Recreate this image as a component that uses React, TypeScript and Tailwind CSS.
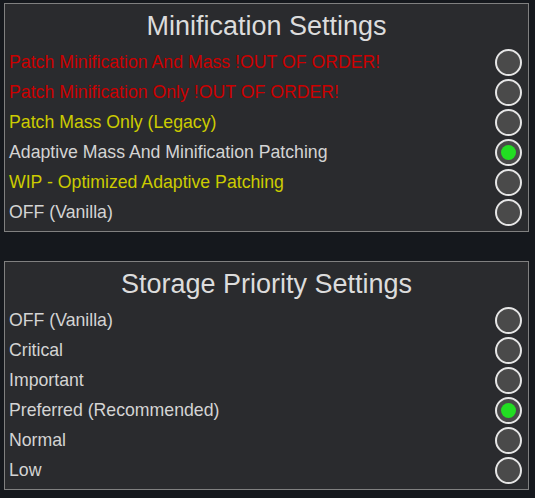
import React from 'react'

type Option = { label: string; tone: 'red' | 'yellow' | 'plain'; on?: boolean }

const minification: Option[] = [
  { label: 'Patch Minification And Mass !OUT OF ORDER!', tone: 'red' },
  { label: 'Patch Minification Only !OUT OF ORDER!', tone: 'red' },
  { label: 'Patch Mass Only (Legacy)', tone: 'yellow' },
  { label: 'Adaptive Mass And Minification Patching', tone: 'plain', on: true },
  { label: 'WIP - Optimized Adaptive Patching', tone: 'yellow' },
  { label: 'OFF (Vanilla)', tone: 'plain' },
]

const storage: Option[] = [
  { label: 'OFF (Vanilla)', tone: 'plain' },
  { label: 'Critical', tone: 'plain' },
  { label: 'Important', tone: 'plain' },
  { label: 'Preferred (Recommended)', tone: 'plain', on: true },
  { label: 'Normal', tone: 'plain' },
  { label: 'Low', tone: 'plain' },
]

const toneClass = {
  red: 'text-[#cc0000]',
  yellow: 'text-[#cccc00]',
  plain: 'text-[#d4d4d4]',
}

function Radio({ on }: { on?: boolean }) {
  return (
    <div className="flex h-[27px] w-[27px] items-center justify-center rounded-full border-2 border-[#e6e6e6] bg-[#4a4a4a]">
      {on && <div className="h-[15px] w-[15px] rounded-full bg-[#22dd22]" />}
    </div>
  )
}

function Panel({ title, options }: { title: string; options: Option[] }) {
  return (
    <div className="h-[229px] w-[525px] border border-[#808080] bg-[#2a2b2e]">
      <div className="h-[43px] pt-[6px] text-center text-[27px] leading-[32px] text-[#dcdcdc]">
        {title}
      </div>
      {options.map((o) => (
        <div key={o.label} className="flex h-[30px] items-center justify-between pl-[4px] pr-[6px]">
          <span className={`text-[17.7px] leading-[20px] ${toneClass[o.tone]}`}>{o.label}</span>
          <Radio on={o.on} />
        </div>
      ))}
    </div>
  )
}

export default function App() {
  return (
    <div
      className="flex h-[498px] w-[535px] flex-col gap-[29px] bg-[#15181d] pl-[4px] pt-[3px]"
      style={{ fontFamily: '"Liberation Sans", Arial, sans-serif' }}
    >
      <Panel title="Minification Settings" options={minification} />
      <Panel title="Storage Priority Settings" options={storage} />
    </div>
  )
}
